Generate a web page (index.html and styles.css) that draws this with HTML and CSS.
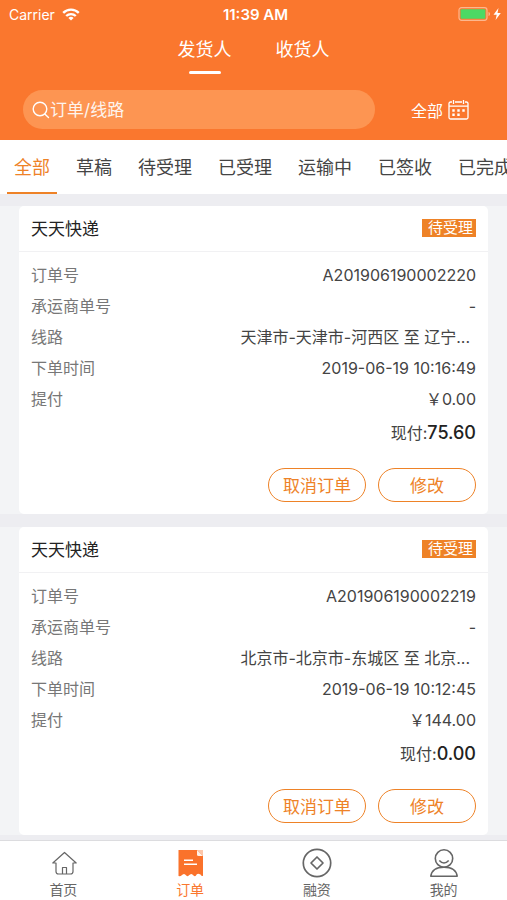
FILE: index.html
```
<!DOCTYPE html>
<html lang="zh-CN">
<head>
  <meta charset="UTF-8" />
  <meta name="viewport" content="width=device-width, initial-scale=1.0" />
  <title>订单</title>
  <link rel="stylesheet" href="styles.css">
</head>
<body>
  <header class="header">
    <div class="status-bar">
      <div class="carrier">
        <span>Carrier</span>
        <svg width="18" height="13" viewBox="0 0 18 13" fill="none" stroke="#fff" stroke-width="2.4">
          <path d="M1.2 4.8a11.2 11.2 0 0 1 15.6 0M4.2 8a7 7 0 0 1 9.6 0" />
          <path d="M9 12.6 6.4 10a3.8 3.8 0 0 1 5.2 0z" fill="#fff" stroke="none" />
        </svg>
      </div>
      <span class="clock">11:39 AM</span>
      <div class="battery">
        <svg width="44" height="14" viewBox="0 0 44 14">
          <rect x="1" y="0.7" width="28" height="12.6" rx="2.5" fill="none" stroke="#fdb78e" stroke-width="1.2" />
          <rect x="2.6" y="2.2" width="24.8" height="9.6" rx="1" fill="#4cd964" />
          <path d="M30.5 5c2 .6 2 3.4 0 4z" fill="#fdb78e" />
          <path d="M40.5 1 35.5 7.8h3.2L37.6 13l5.200-7h-3.300z" fill="#fff" />
        </svg>
      </div>
    </div>
    <div class="role-tabs">
      <button class="role active" type="button">发货人</button>
      <button class="role" type="button">收货人</button>
    </div>
    <div class="search-row">
      <label class="search">
        <svg width="18" height="18" viewBox="0 0 18 18" fill="none" stroke="#fff" stroke-width="1.4" stroke-linecap="round">
          <circle cx="8" cy="8" r="6.8" />
          <path d="m12.8 13 3.7 3.6" />
        </svg>
        <input type="text" placeholder="订单/线路" aria-label="订单/线路">
      </label>
      <button class="date-filter" type="button">
        全部
        <svg width="21" height="20" viewBox="0 0 21 20" fill="none" stroke="#fff" stroke-width="1.3">
          <path d="M4 2H2.5A1.5 1.5 0 0 0 1 3.500v14A1.500 1.500 0 0 0 2.500 19h16a1.500 1.500 0 0 0 1.500-1.500v-14A1.500 1.500 0 0 0 18.500 2H17M7 2h7M1 6.200h19M5.500 0v4M15.500 0v4" />
          <path d="M9.300 10.500h2.400M14.300 10.500h2.400M4.300 14.800h2.400M9.300 14.800h2.400M4.300 10.500h2.400" stroke-width="2.400" />
        </svg>
      </button>
    </div>
  </header>

  <nav class="filters">
    <button class="filter active" type="button">全部</button>
    <button class="filter" type="button">草稿</button>
    <button class="filter" type="button">待受理</button>
    <button class="filter" type="button">已受理</button>
    <button class="filter" type="button">运输中</button>
    <button class="filter" type="button">已签收</button>
    <button class="filter" type="button">已完成</button>
  </nav>

  <main class="orders">
    <div class="order">
      <article class="card">
        <div class="card-head">
          <h2>天天快递</h2>
          <span class="tag">待受理</span>
        </div>
        <dl class="details">
          <div class="row"><dt>订单号</dt><dd>A201906190002220</dd></div>
          <div class="row"><dt>承运商单号</dt><dd>-</dd></div>
          <div class="row"><dt>线路</dt><dd class="route">天津市-天津市-河西区 至 辽宁...</dd></div>
          <div class="row"><dt>下单时间</dt><dd>2019-06-19 10:16:49</dd></div>
          <div class="row"><dt>提付</dt><dd>￥0.00</dd></div>
        </dl>
        <p class="total">现付:<strong>75.60</strong></p>
        <div class="actions">
          <button type="button">取消订单</button>
          <button type="button">修改</button>
        </div>
      </article>
    </div>
    <div class="order">
      <article class="card">
        <div class="card-head">
          <h2>天天快递</h2>
          <span class="tag">待受理</span>
        </div>
        <dl class="details">
          <div class="row"><dt>订单号</dt><dd>A201906190002219</dd></div>
          <div class="row"><dt>承运商单号</dt><dd>-</dd></div>
          <div class="row"><dt>线路</dt><dd class="route">北京市-北京市-东城区 至 北京...</dd></div>
          <div class="row"><dt>下单时间</dt><dd>2019-06-19 10:12:45</dd></div>
          <div class="row"><dt>提付</dt><dd>￥144.00</dd></div>
        </dl>
        <p class="total">现付:<strong>0.00</strong></p>
        <div class="actions">
          <button type="button">取消订单</button>
          <button type="button">修改</button>
        </div>
      </article>
    </div>
  </main>

  <nav class="tab-bar">
    <a class="tab" href="#home">
      <svg width="30" height="30" viewBox="0 0 30 30" fill="none" stroke="#666" stroke-width="1.2" stroke-linejoin="round">
        <path d="M16.500 4.500 4.800 15H8v8.500q0 2.500 2.500 2.500h12q2.500 0 2.500-2.500V15h3.200z" />
        <path d="M14.500 26v-6.500h4V26" />
      </svg>
      首页
    </a>
    <a class="tab active" href="#orders">
      <svg width="30" height="30" viewBox="0 0 30 30">
        <path d="M3.500 2h18.500l6 6v20q-2 0-2.500-1.500-3.500-2-4.500 1-1 1.500-2.500 0-2-3-4.800 0-1 1.500-2.500 0-2-3-4.800 0-.8 1-2.900.5z" fill="#fa722b" />
        <path d="m22 2 6 6h-4.500q-1.500 0-1.500-1.500z" fill="#fff1e8" />
        <path d="M22 2h6v6z" fill="#fa722b" opacity=".4" />
        <path d="M9 12.200h9M9 16.200h13" stroke="#fff" stroke-width="1.600" />
      </svg>
      订单
    </a>
    <a class="tab" href="#finance">
      <svg width="30" height="30" viewBox="0 0 30 30" fill="none" stroke="#666" stroke-width="1.700">
        <circle cx="15" cy="15" r="13.700" />
        <path d="m15 9 6 6-6 6-6-6z" stroke-linejoin="round" />
      </svg>
      融资
    </a>
    <a class="tab" href="#mine">
      <svg width="30" height="30" viewBox="0 0 30 30" fill="none" stroke="#666" stroke-width="1.600">
        <circle cx="15" cy="10.500" r="8.700" />
        <path d="M10.300 12.500q4.700 5 9.400 0" />
        <path d="M1.800 28.200q1.200-9 13.200-9t13.200 9z" stroke-linejoin="round" />
      </svg>
      我的
    </a>
  </nav>
</body>
</html>
```
FILE: styles.css
```
* {
  box-sizing: border-box;
}

body {
  display: flex;
  flex-direction: column;
  height: 100vh;
  margin: 0;
  background-color: #ededf1;
  color: #444;
  font-family: Inter, "Noto Sans CJK SC", sans-serif;
  font-size: 16px;
}

button {
  padding: 0;
  border: none;
  background: none;
  font-family: inherit;
  cursor: pointer;
}

svg {
  display: block;
  flex-shrink: 0;
}

.header {
  flex-shrink: 0;
  height: 140px;
  background-color: #fa772e;
  color: white;
}

.status-bar {
  display: grid;
  grid-template-columns: 1fr auto 1fr;
  align-items: center;
  height: 28px;
  padding: 0 5px 0 9px;
  font-size: 14px;
}

.carrier {
  display: flex;
  align-items: center;
  gap: 7px;
}

.clock {
  font-size: 15px;
  font-weight: 600;
}

.battery {
  justify-self: end;
}

.role-tabs {
  display: flex;
  justify-content: center;
  gap: 44px;
  height: 62px;
  padding-top: 8px;
}

.role {
  display: flex;
  flex-direction: column;
  align-items: center;
  gap: 7px;
  color: white;
  font-size: 18px;
  line-height: 28px;
}

.role.active::after {
  content: "";
  width: 32px;
  height: 3px;
  border-radius: 2px;
  background-color: white;
}

.search-row {
  display: flex;
  align-items: center;
  padding: 0 38px 0 23px;
  gap: 36px;
}

.search {
  display: flex;
  flex: 1;
  align-items: center;
  height: 39px;
  padding: 0 9px;
  border-radius: 20px;
  background-color: #fd9552;
}

.search input {
  flex: 1;
  min-width: 0;
  padding: 0;
  border: none;
  outline: none;
  background: none;
  color: white;
  font-family: inherit;
  font-size: 17px;
}

.search input::placeholder {
  color: white;
  opacity: 0.9;
}

.date-filter {
  display: flex;
  align-items: center;
  gap: 5px;
  color: white;
  font-size: 16px;
}

.filters {
  display: flex;
  flex-shrink: 0;
  gap: 12px;
  height: 54px;
  padding: 0 7px;
  background-color: white;
  overflow-x: auto;
  scrollbar-width: none;
}

.filter {
  flex-shrink: 0;
  padding: 0 7px;
  border-bottom: 2px solid transparent;
  color: #444;
  font-size: 18px;
}

.filter.active {
  border-bottom-color: #ee8227;
  color: #ee8227;
}

.orders {
  display: flex;
  flex: 1;
  flex-direction: column;
  gap: 13px;
  min-height: 0;
  padding-top: 12px;
  overflow-y: auto;
  scrollbar-width: none;
}

.order {
  flex-shrink: 0;
  padding: 0 19px;
  background-color: #f3f4f6;
}

.card {
  padding-bottom: 12px;
  border-radius: 5px;
  background-color: white;
}

.card-head {
  display: flex;
  align-items: center;
  justify-content: space-between;
  height: 46px;
  padding: 0 12px 2px;
  border-bottom: 1px solid #f1f1f3;
}

.card-head h2 {
  margin: 0;
  color: #222;
  font-size: 17px;
  font-weight: 400;
}

.tag {
  padding: 0 3px 0 6px;
  background-color: #ee8227;
  color: white;
  font-size: 15px;
  line-height: 18px;
}

.details {
  margin: 0;
  padding: 8px 12px 0;
}

.row {
  display: flex;
  justify-content: space-between;
  line-height: 31px;
}

.row dt {
  color: #777;
}

.row dd {
  margin: 0;
}

.row .route {
  padding-right: 6px;
}

.total {
  margin: 0;
  padding: 0 12px;
  line-height: 36px;
  text-align: right;
}

.total strong {
  color: #222;
  font-size: 18px;
  font-weight: 500;
}

.actions {
  display: flex;
  justify-content: flex-end;
  gap: 12px;
  padding: 17px 12px 0;
}

.actions button {
  width: 98px;
  height: 34px;
  padding-bottom: 2px;
  border: 1px solid #ee8227;
  border-radius: 17px;
  color: #ee8227;
  font-size: 17px;
}

.tab-bar {
  display: grid;
  flex-shrink: 0;
  grid-template-columns: repeat(4, 1fr);
  height: 60px;
  border-top: 1px solid #dcdcdf;
  background-color: white;
}

.tab {
  display: flex;
  flex-direction: column;
  align-items: center;
  gap: 2px;
  padding-top: 7px;
  color: #666;
  font-size: 14px;
  line-height: 20px;
  text-decoration: none;
}

.tab.active {
  color: #fa772e;
}
```
